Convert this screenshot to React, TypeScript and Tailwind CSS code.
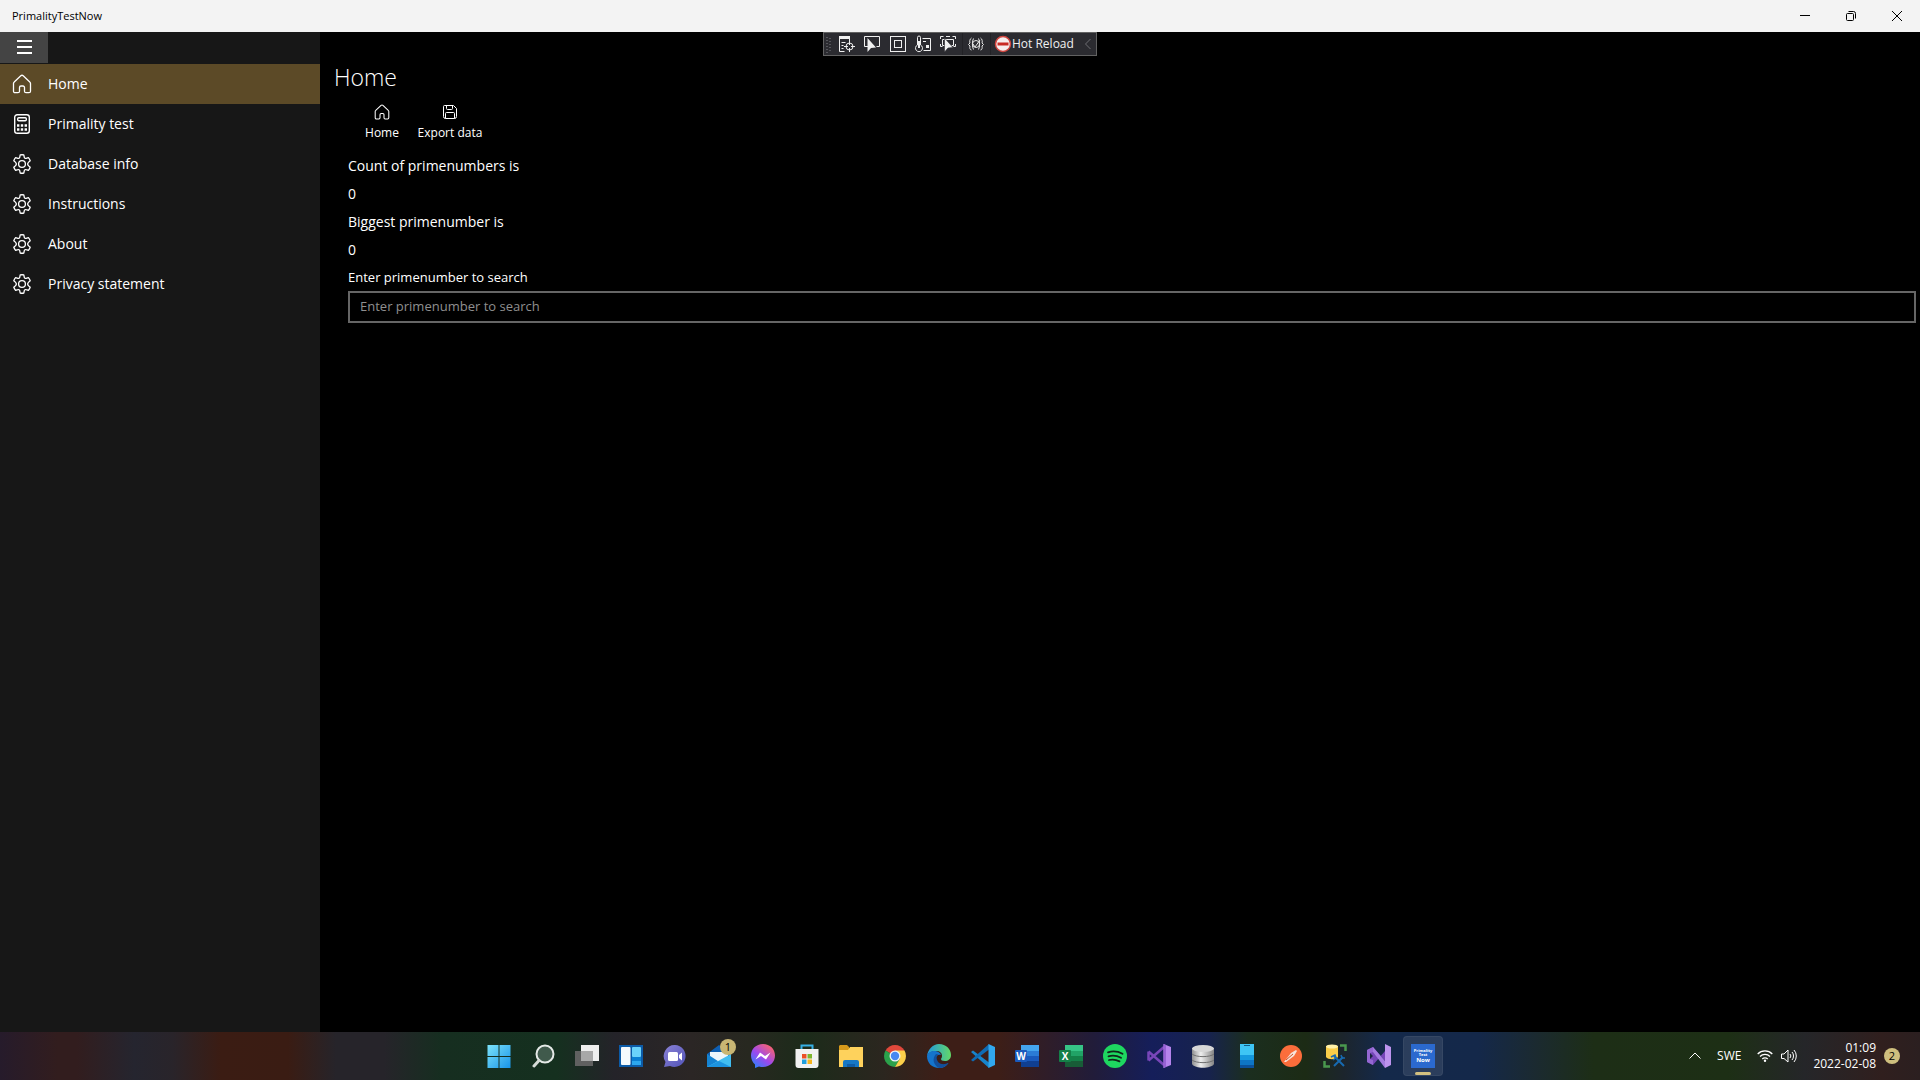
import type { ReactNode } from "react";

const NAV = [
  { label: "Home", icon: <HomeIcon className="size-5" />, active: true },
  { label: "Primality test", icon: <CalculatorIcon /> },
  { label: "Database info", icon: <GearIcon /> },
  { label: "Instructions", icon: <GearIcon /> },
  { label: "About", icon: <GearIcon /> },
  { label: "Privacy statement", icon: <GearIcon /> },
];

const STATS = [
  { label: "Count of primenumbers is", value: 0 },
  { label: "Biggest primenumber is", value: 0 },
];

export default function App() {
  return (
    <div className="flex min-h-screen flex-col bg-black font-['Open_Sans','Noto_Sans',sans-serif] text-white">
      <TitleBar />
      <div className="relative flex flex-1">
        <Sidebar />
        <HomePage />
        <DebugToolbar />
      </div>
      <Taskbar />
    </div>
  );
}

// ─── Window chrome ──────────────────────────────────────────────────────────

function TitleBar() {
  return (
    <header className="flex h-8 items-center justify-between bg-[#f3f3f3] text-black">
      <span className="pl-3 text-[11px]">PrimalityTestNow</span>
      <div className="flex h-full">
        <WindowBtn title="Minimize">
          <path d="M1 5.5h10" />
        </WindowBtn>
        <WindowBtn title="Restore">
          <rect x="1.5" y="3.5" width="7" height="7" rx="1" />
          <path d="M3.5 1.5h5a2 2 0 0 1 2 2v5" />
        </WindowBtn>
        <WindowBtn title="Close">
          <path d="M1 1l10 10M11 1L1 11" />
        </WindowBtn>
      </div>
    </header>
  );
}

function WindowBtn({ title, children }: { title: string; children: ReactNode }) {
  return (
    <button type="button" aria-label={title} className="flex h-full w-[46px] items-center justify-center">
      <svg viewBox="0 0 12 12" className="size-3 fill-none stroke-black">
        {children}
      </svg>
    </button>
  );
}

function Sidebar() {
  return (
    <nav className="w-80 shrink-0 bg-[#171717]">
      <div className="h-8">
        <button type="button" aria-label="Menu" className="flex h-[31px] w-12 items-center justify-center bg-[#444444]">
          <svg viewBox="0 0 16 16" className="size-4 fill-white">
            <path d="M1 0h15v2H1zM1 6h15v2H1zM1 12h15v2H1z" />
          </svg>
        </button>
      </div>
      {NAV.map(({ label, icon, active }) => (
        <a
          key={label}
          href="#"
          aria-current={active ? "page" : undefined}
          className={`flex h-10 items-center gap-4 px-3 text-sm ${active ? "bg-[#5c4a27]" : ""}`}
        >
          {icon}
          <span>{label}</span>
        </a>
      ))}
    </nav>
  );
}

// ─── Page ───────────────────────────────────────────────────────────────────

function HomePage() {
  return (
    <main className="min-w-0 flex-1 pt-[27px]">
      <h1 className="pl-3.5 text-[23px] leading-9 font-light">Home</h1>
      <div className="flex pt-[9px] pl-7">
        <CommandBtn label="Home">
          <HomeIcon className="size-4" />
        </CommandBtn>
        <CommandBtn label="Export data">
          <SaveIcon />
        </CommandBtn>
      </div>
      <div className="pt-[9px] pr-1 pl-7">
        {STATS.map(({ label, value }) => (
          <dl key={label} className="text-sm leading-7">
            <dt>{label}</dt>
            <dd>{value}</dd>
          </dl>
        ))}
        <label htmlFor="search" className="block text-[13px] leading-[27px]">
          Enter primenumber to search
        </label>
        <input
          id="search"
          type="text"
          placeholder="Enter primenumber to search"
          className="block h-8 w-full border-2 border-[#666666] bg-black px-2.5 pb-0.5 text-[13px] placeholder:text-[#8f8f8f]"
        />
      </div>
    </main>
  );
}

function CommandBtn({ label, children }: { label: string; children: ReactNode }) {
  return (
    <button type="button" className="flex w-[68px] flex-col items-center gap-[3px] text-xs leading-5 whitespace-nowrap">
      {children}
      {label}
    </button>
  );
}

function DebugToolbar() {
  return (
    <div className="absolute top-0 left-1/2 flex h-6 w-[274px] -translate-x-1/2 items-center border border-[#626262] bg-[#2b2b30]">
      <svg viewBox="0 0 144 22" className="h-[22px] w-36 shrink-0 fill-none stroke-[#f0f0f0]">
        <path d="M3 4v16M6 5v15" stroke="#55555b" strokeWidth="2" strokeDasharray="1 2" />
        <path d="M15 3h11v3H15z" className="fill-[#f0f0f0]" stroke="none" />
        <path d="M15.500 5v13.500h5M25.500 5v3M17.500 9.500h4M17.500 12.500h2M17.500 15.500h2" />
        <circle cx="25.500" cy="13.500" r="3.500" />
        <path d="M25.500 8v4M25.500 15v4M20 13.500h4M27 13.500h4" />
        <path d="M44 13.500h-3.500v-10h15v10h-3" />
        <path d="M43.500 5v14l3.500-4 5-.5z" className="fill-[#f0f0f0]" stroke="none" />
        <rect x="66.500" y="3.500" width="15" height="15" />
        <rect x="70.500" y="7.500" width="7" height="7" />
        <path d="M93.500 12V4.500a1.500 1.500 0 0 1 3 0V12a3.500 3.500 0 1 1-3 0z" />
        <path d="M95 8v7" strokeWidth="2" />
        <path d="M98.500 5.500h8v12h-7M99 8.500h3" />
        <path d="M102 12h3v3h-3z" className="fill-[#f0f0f0]" stroke="none" />
        <path d="M116.500 6V3.500h3M128.500 3.500h3V6M131.500 11v2.500h-2M116.500 11v2.500h2" />
        <path d="M121 12.500h-2.500v-6h11v6h-2M122 3.500h4" />
        <path d="M120.500 5v14l3.500-4 5-.5z" className="fill-[#f0f0f0]" stroke="#2b2b30" strokeWidth=".6" />
        <path d="M138.500 0v22" stroke="#222226" />
      </svg>
      <svg viewBox="0 0 26 22" className="h-[22px] w-[26px] shrink-0 fill-none stroke-[#e5e5e5]">
        <path d="M3.500 5C1.500 6 1.500 9 2 10L.5 11.500 2 13c-.5 2 0 4 1.500 4M12.500 5c2 1 2 4 1.500 5l1.500 1.500L14 13c.5 2 0 4-1.500 4" />
        <path d="M5.500 5.500C4 8 4 14 5.500 16.500M10.500 16.500C12 14 12 8 10.500 5.500M5 11l2 3 5-7" />
        <circle cx="8" cy="11" r="3.500" />
        <path d="M22.500 0v22" stroke="#222226" />
      </svg>
      <button type="button" className="flex items-center text-xs whitespace-nowrap text-[#f0f0f0]">
        <svg viewBox="0 0 18 18" className="size-[18px]">
          <circle cx="9" cy="9" r="7.500" fill="#f6eeee" stroke="#d0443e" strokeWidth="1.500" />
          <path d="M3.500 7.500h11v3h-11z" fill="#c92a24" />
        </svg>
        Hot Reload
      </button>
      <svg viewBox="0 0 8 12" className="mr-1 ml-auto h-3 w-2 shrink-0 fill-none stroke-[#6e6e73]">
        <path d="M6.500 1L1.500 6l5 5" />
      </svg>
    </div>
  );
}

// ─── Taskbar ────────────────────────────────────────────────────────────────

function Taskbar() {
  return (
    <footer className="grid h-12 grid-cols-[1fr_auto_1fr] items-center bg-[linear-gradient(90deg,#261b2b_0%,#321d1e_3%,#321d1e_4%,#25252f_7%,#29242a_9%,#3b1c13_11.500%,#3a1c13_15%,#26242a_17.500%,#26242a_20%,#162e20_23%,#15301f_29%,#242329_32%,#2b2625_36%,#272820_39%,#1c2b1a_42%,#2b261f_46%,#3d1e17_49%,#3d1e17_52%,#211c3a_57%,#151e5a_60%,#17234c_63%,#1b2e1f_65%,#1c2b15_68%,#1c252d_70%,#14294a_72%,#14284a_77%,#1b2a30_80%,#1d2e16_83%,#1d2f15_90%,#252629_94%,#301f1e_98%,#2b1f20_100%)] pl-0.5">
      <div />
      <div className="flex items-center gap-1">
        {TASKBAR_ICONS.map(({ name, icon, badge, active }) => (
          <button
            key={name}
            type="button"
            aria-label={name}
            className={`relative flex size-10 items-center justify-center rounded ${active ? "border border-white/5 bg-white/10" : ""}`}
          >
            <svg viewBox="0 0 24 24" className="size-6">
              {icon}
            </svg>
            {badge && (
              <span className="absolute top-[3px] right-[3px] flex size-4 items-center justify-center rounded-full bg-[#c8b674] text-[11px] text-black">
                {badge}
              </span>
            )}
            {active && <span className="absolute bottom-0 h-[3px] w-4 rounded-full bg-[#d2c080]" />}
          </button>
        ))}
      </div>
      <div className="flex items-center justify-end pr-5 text-xs leading-4">
        <button type="button" aria-label="Show hidden icons" className="mr-4">
          <svg viewBox="0 0 12 8" className="h-2 w-3 fill-none stroke-white">
            <path d="M.5 6.500L6 1l5.500 5.500" />
          </svg>
        </button>
        <button type="button" className="mr-4">SWE</button>
        <button type="button" aria-label="Network and volume" className="mr-4 flex gap-2">
          <WifiIcon />
          <SpeakerIcon />
        </button>
        <button type="button" className="mr-2 text-right">
          01:09
          <br />
          2022-02-08
        </button>
        <button type="button" aria-label="Notifications" className="flex size-4 items-center justify-center rounded-full bg-[#cfbf7e] text-[11px] text-black">
          2
        </button>
      </div>
    </footer>
  );
}

interface TaskbarIcon {
  name: string;
  icon: ReactNode;
  badge?: number;
  active?: boolean;
}

const TASKBAR_ICONS: TaskbarIcon[] = [
  {
    name: "Start",
    icon: (
      <>
        <linearGradient id="start" x1="0" y1="0" x2="24" y2="24" gradientUnits="userSpaceOnUse">
          <stop stopColor="#7fe5fb" />
          <stop offset="1" stopColor="#1793e8" />
        </linearGradient>
        <path d="M.500 1h11v11h-11zM12.500 1h11v11h-11zM.500 13h11v11h-11zM12.500 13h11v11h-11z" fill="url(#start)" />
      </>
    ),
  },
  {
    name: "Search",
    icon: (
      <>
        <circle cx="14" cy="10" r="8.500" fill="#405a4c" stroke="#e5eae7" strokeWidth="2" />
        <path d="M8 16.500L3 22" stroke="#d5dbd7" strokeWidth="3" strokeLinecap="round" />
      </>
    ),
  },
  {
    name: "Task view",
    icon: (
      <>
        <path d="M0 7h18v15H0z" fill="#606060" />
        <path d="M6 1h18v16H6z" fill="#eeeeee" />
        <path d="M6 7h12v10H6z" fill="#a8a8a8" />
      </>
    ),
  },
  {
    name: "Widgets",
    icon: (
      <>
        <path d="M0 1h24v22H0z" fill="#0c5ba8" />
        <rect x="2" y="3" width="9.500" height="18" rx="1" fill="#f5fafd" />
        <rect x="13" y="3" width="9" height="10" rx="1" fill="#6bd3fb" />
        <path d="M13 13h9v4h-9z" fill="#0b80d4" />
        <path d="M13 17h9v4h-9z" fill="#2ca7ef" />
      </>
    ),
  },
  {
    name: "Chat",
    icon: (
      <>
        <linearGradient id="chat" x2="1" y2="1">
          <stop stopColor="#8b82d5" />
          <stop offset="1" stopColor="#5153b8" />
        </linearGradient>
        <path d="M12 1a11 11 0 1 1-5 21l-6 1 1.500-5A11 11 0 0 1 12 1z" fill="url(#chat)" />
        <rect x="5" y="8" width="10" height="9" rx="1.500" fill="#fff" />
        <path d="M16 11l3-2.500v8L16 14z" fill="#fff" />
      </>
    ),
  },
  {
    name: "Mail",
    badge: 1,
    icon: (
      <>
        <path d="M0 10L12 1l12 9v13H0z" fill="#0f5fb2" />
        <path d="M3 8h18v7l-9 4-9-4z" fill="#eef6fb" />
        <path d="M0 10l14 9-14 4z" fill="#1583d2" />
        <path d="M24 10v13H0z" fill="#41bdf0" />
        <path d="M24 23l-12-6-12 6z" fill="#1c93df" />
      </>
    ),
  },
  {
    name: "Messenger",
    icon: (
      <>
        <linearGradient id="messenger" x1="0" y1="1" x2=".8" y2="0">
          <stop stopColor="#168dff" />
          <stop offset=".5" stopColor="#9c48ef" />
          <stop offset="1" stopColor="#ff6468" />
        </linearGradient>
        <path d="M12 0c7 0 12 5 12 11.500S19 23 12 23c-1.500 0-2.500-.2-4-.6L4 24v-3.500c-2.500-2-4-5.500-4-9C0 5 5 0 12 0z" fill="url(#messenger)" />
        <path d="M4.500 15.500l4.500-7 5 3.500 5.500-3.500-4.500 7-5-3.500z" fill="#fff" />
      </>
    ),
  },
  {
    name: "Microsoft Store",
    icon: (
      <>
        <path d="M6.500 7V1.500h11V7" fill="none" stroke="#36b0e5" strokeWidth="2" />
        <path d="M.500 5h23v16a3 3 0 0 1-3 3h-17a3 3 0 0 1-3-3z" fill="#f1f1f1" />
        <path d="M7 10h4.500v4.500H7z" fill="#eb4f26" />
        <path d="M12.500 10H17v4.500h-4.500z" fill="#7db52d" />
        <path d="M7 15.500h4.500V20H7z" fill="#209fdc" />
        <path d="M12.500 15.500H17V20h-4.500z" fill="#f8b41d" />
      </>
    ),
  },
  {
    name: "File Explorer",
    icon: (
      <>
        <path d="M0 2l1-1h7l2 2v4H0z" fill="#d79a1b" />
        <path d="M0 6h9l2-3h13v20H0z" fill="#fed25c" />
        <path d="M4 23v-5a2 2 0 0 1 2-2h12a2 2 0 0 1 2 2v5z" fill="#1677c5" />
        <path d="M8 20h8v3H8z" fill="#0f5ca6" />
      </>
    ),
  },
  {
    name: "Chrome",
    icon: (
      <>
        <path d="M12 12L2.500 6.500a11 11 0 0 1 19 0z" fill="#e0483b" />
        <path d="M12 12L2.500 6.500A11 11 0 0 0 12 23l5-8z" fill="#2ba14b" />
        <path d="M12 6.500h9.500A11 11 0 0 1 12 23l5-8.500z" fill="#fbd04a" />
        <circle cx="12" cy="12" r="5.500" fill="#f3f5f8" />
        <circle cx="12" cy="12" r="4.200" fill="#4688f1" />
      </>
    ),
  },
  {
    name: "Edge",
    icon: (
      <>
        <linearGradient id="edge" x2="1">
          <stop stopColor="#2097df" />
          <stop offset="1" stopColor="#63d867" />
        </linearGradient>
        <path d="M0 12C1 5 6 0 12 0c7 0 12 5 12 11 0 4-3 6-6 6s-4-1-4-2 1-1 1-3c0-3-2-5-6-5-4 0-8 2-9 5z" fill="url(#edge)" />
        <path d="M0 12c1-4 5-5.500 8.500-5 3 .5 5 2 5.500 4-5-1-6 3-4.500 6 2 4 7 5 12 2-2 3-5 5-9.500 5C5 24 0 19 0 12z" fill="#1474cc" />
        <path d="M9 10c-4 4-3 11 3 14 4 0 7.500-2 9.500-5-4 2-9 1.500-11-2-1.500-3-1-5 1-6.500z" fill="#124f9b" />
      </>
    ),
  },
  {
    name: "Visual Studio Code",
    icon: (
      <>
        <path d="M0 8l2-1.500L18 18.500V24z" fill="#1784cb" />
        <path d="M0 16l2 1.500L18 5.500V0z" fill="#0f6cb4" />
        <path d="M17.500 0L24 3v18l-6.500 3z" fill="#31a8ee" />
      </>
    ),
  },
  {
    name: "Word",
    icon: <OfficeIcon letter="W" colors={["#44a5ee", "#2b7cd6", "#195abd", "#103f91"]} />,
  },
  {
    name: "Excel",
    icon: <OfficeIcon letter="X" colors={["#36c486", "#21a366", "#148048", "#185c37"]} />,
  },
  {
    name: "Spotify",
    icon: (
      <>
        <circle cx="12" cy="12" r="12" fill="#1ed760" />
        <path d="M5 8.300c5-1.500 10-1 14.500 1.500M5.500 12.300c4.500-1.200 8.500-.7 12.500 1.500M6 16c4-1 7-.5 10.500 1.400" fill="none" stroke="#10251a" strokeWidth="1.800" strokeLinecap="round" />
      </>
    ),
  },
  {
    name: "Visual Studio Preview",
    icon: (
      <>
        <path d="M1.500 7.500v9M1.500 7.500L17 21M1.500 16.500L17 3" fill="none" stroke="#7846b8" strokeWidth="2.500" strokeLinejoin="round" />
        <path d="M16.500 0L24 3v18l-7.500 3z" fill="#b583ec" />
        <path d="M16.500 0L19 1v22l-2.500 1z" fill="#9661d4" />
      </>
    ),
  },
  {
    name: "Database",
    icon: (
      <>
        <linearGradient id="disk">
          <stop stopColor="#909090" />
          <stop offset=".4" stopColor="#eeeeee" />
          <stop offset="1" stopColor="#858585" />
        </linearGradient>
        <path d="M1 4h22v16c-3 5-19 5-22 0z" fill="url(#disk)" />
        <ellipse cx="12" cy="4.500" rx="11" ry="3.500" fill="#d7d7d7" />
        <path d="M1 10c4 3.500 18 3.500 22 0M1 16c4 3.500 18 3.500 22 0" fill="none" stroke="#707070" />
      </>
    ),
  },
  {
    name: "Your Phone",
    icon: (
      <>
        <path d="M5 0h14v24H5z" fill="#3ec5f5" />
        <path d="M5 11h14v5H5z" fill="#1599df" />
        <path d="M5 16h14v5H5z" fill="#0e75c5" />
        <path d="M5 21h14v3H5z" fill="#0b509a" />
        <path d="M9 1.500h6" stroke="#145c85" />
      </>
    ),
  },
  {
    name: "Postman",
    icon: (
      <>
        <circle cx="12" cy="12" r="11" fill="#fb6d3b" />
        <path d="M5 18l7-9 5-3 1 1-3 5-8 6z" fill="#f7e3da" />
        <path d="M7 16l7-6" stroke="#c8542c" />
      </>
    ),
  },
  {
    name: "SQL Server Management Studio",
    icon: (
      <>
        <path d="M3 2h12v11c-2 3-10 3-12 0z" fill="#f9cd49" />
        <ellipse cx="9" cy="2.500" rx="6" ry="2" fill="#fff0a8" />
        <path d="M17 1.500h5.500V7M1.500 17v5.500H7" fill="none" stroke="#4a984e" strokeWidth="2.500" />
        <path d="M11 22l9-9M11 12l10 10" stroke="#1769b0" strokeWidth="2" />
        <path d="M8 13l4-2 1 3-3 2M18 11l1 3h3" fill="none" stroke="#1769b0" strokeWidth="1.500" />
      </>
    ),
  },
  {
    name: "Visual Studio",
    icon: (
      <>
        <path d="M0 6l6-3 12 14V7L6 21l-6-3z" fill="#7546b8" />
        <path d="M3 9v6l3-3z" fill="#1a2440" />
        <path d="M0 6l6-3v5l-3 1v6l3 1v5l-6-3z" fill="#9467d2" />
        <path d="M6 3l12 14v7L6 8z" fill="#a47be0" />
        <path d="M18 0l6 3v18l-6 3z" fill="#bd93ee" />
      </>
    ),
  },
  {
    name: "PrimalityTestNow",
    active: true,
    icon: (
      <>
        <path d="M0 0h24v24H0z" fill="#2b69ce" />
        <g fill="#fff" textAnchor="middle" fontWeight="700">
          <text x="12" y="8" fontSize="4">Primality</text>
          <text x="12" y="12" fontSize="4">Test</text>
          <text x="12" y="18" fontSize="6">Now</text>
        </g>
      </>
    ),
  },
];

// ─── Icons ──────────────────────────────────────────────────────────────────

function OfficeIcon({ letter, colors }: { letter: string; colors: string[] }) {
  return (
    <>
      <path d="M6 1h18v6H6z" fill={colors[0]} />
      <path d="M6 7h18v5H6z" fill={colors[1]} />
      <path d="M6 12h18v5H6z" fill={colors[2]} />
      <path d="M6 17h18v6H6z" fill={colors[3]} />
      <rect y="6" width="12" height="12" rx="1" fill={colors[2]} />
      <text x="6" y="15.500" fontSize="10" fontWeight="700" textAnchor="middle" fill="#fff">
        {letter}
      </text>
    </>
  );
}

function HomeIcon({ className }: { className: string }) {
  return (
    <svg viewBox="0 0 20 20" className={`${className} shrink-0 fill-none stroke-current`} strokeWidth="1.300" strokeLinejoin="round">
      <path d="M1.500 9.500a2 2 0 0 1 .7-1.500l6.600-6.200a1.800 1.800 0 0 1 2.400 0L17.800 8a2 2 0 0 1 .7 1.500v7.700a1.500 1.500 0 0 1-1.500 1.500h-3a1.500 1.500 0 0 1-1.500-1.500v-3.700a1.500 1.500 0 0 0-1.500-1.500H9a1.500 1.500 0 0 0-1.500 1.500v3.700A1.500 1.500 0 0 1 6 18.700H3a1.500 1.500 0 0 1-1.500-1.500z" />
    </svg>
  );
}

function CalculatorIcon() {
  return (
    <svg viewBox="0 0 20 20" className="size-5 shrink-0 fill-none stroke-current" strokeWidth="1.400">
      <rect x="2.700" y=".7" width="14.600" height="18.600" rx="2.500" />
      <rect x="5.700" y="3.700" width="8.600" height="3" rx="1" />
      <path d="M5 11.500h10M5 15.500h10" strokeWidth="2.400" strokeDasharray="2.400 1.400" />
    </svg>
  );
}

function GearIcon() {
  return (
    <svg viewBox="0 0 20 20" className="size-5 shrink-0 fill-none stroke-current" strokeWidth="1.300" strokeLinejoin="round">
      <circle cx="10" cy="10" r="3.400" />
      <path d="M8.200.9a10 10 0 0 1 3.600 0l.5 2.400a1.400 1.400 0 0 0 1.800 1l2.300-.7a10 10 0 0 1 1.800 3.100L16.400 8.400a2.100 2.100 0 0 0 0 3.200l1.800 1.700a10 10 0 0 1-1.800 3.100l-2.300-.7a1.400 1.400 0 0 0-1.800 1l-.5 2.400a10 10 0 0 1-3.600 0l-.5-2.400a1.400 1.400 0 0 0-1.800-1l-2.300.7a10 10 0 0 1-1.800-3.100l1.800-1.700a2.100 2.100 0 0 0 0-3.200L1.800 6.700a10 10 0 0 1 1.800-3.100l2.300.7a1.400 1.400 0 0 0 1.800-1z" />
    </svg>
  );
}

function SaveIcon() {
  return (
    <svg viewBox="0 0 16 16" className="size-4 fill-none stroke-current">
      <path d="M2.500 1.500h9l3 3v8a2 2 0 0 1-2 2h-9a2 2 0 0 1-2-2v-10a1 1 0 0 1 1-1z" />
      <path d="M4.500 1.500v3a1 1 0 0 0 1 1h4a1 1 0 0 0 1-1v-3M3.500 14.500v-5a1 1 0 0 1 1-1h7a1 1 0 0 1 1 1v5" />
    </svg>
  );
}

function WifiIcon() {
  return (
    <svg viewBox="0 0 16 14" className="h-3.5 w-4 fill-none stroke-white" strokeWidth="1.300">
      <path d="M.7 5a10.300 10.300 0 0 1 14.600 0M3 7.500a7 7 0 0 1 10 0M5.300 10a3.800 3.800 0 0 1 5.400 0" />
      <circle cx="8" cy="11.800" r="1.200" className="fill-white" stroke="none" />
    </svg>
  );
}

function SpeakerIcon() {
  return (
    <svg viewBox="0 0 16 14" className="h-3.5 w-4 fill-none stroke-white">
      <path d="M.500 5v4.500H3l4 3.500V1L3 5z" strokeLinejoin="round" />
      <path d="M9 5a3 3 0 0 1 0 4M11 3a6 6 0 0 1 0 8M13 1a9 9 0 0 1 0 12" />
    </svg>
  );
}
